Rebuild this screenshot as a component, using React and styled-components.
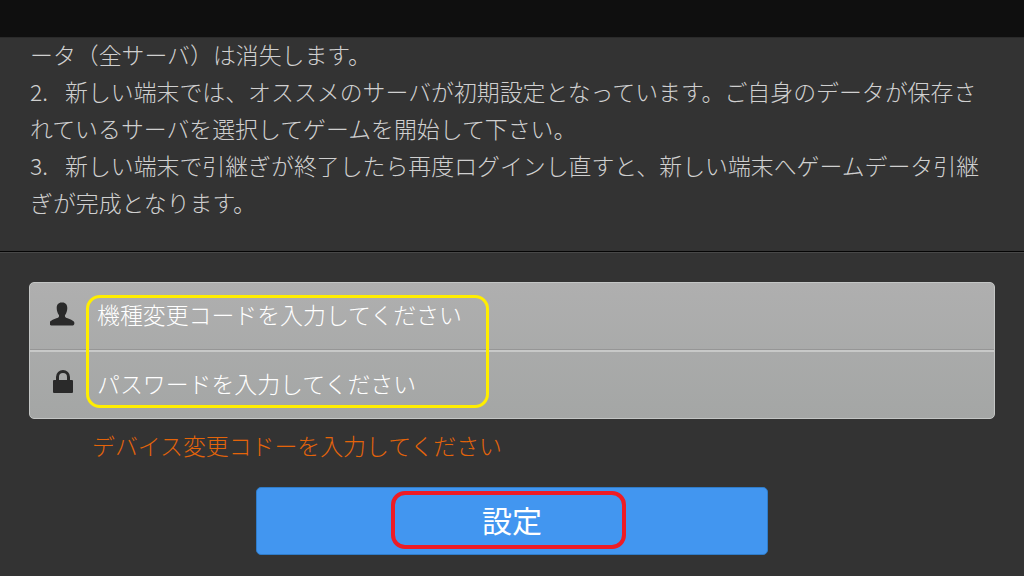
import React from "react";
import styled, { createGlobalStyle } from "styled-components";

const Global = createGlobalStyle`
  html, body { margin: 0; padding: 0; background: #333333; }
  body { font-family: "Noto Sans CJK JP", "Noto Sans", sans-serif; font-weight: 300; }
`;

const Page = styled.div`
  width: 1024px;
  height: 576px;
  overflow: hidden;
  background: #333333;
  display: flex;
  flex-direction: column;
`;

const TopBar = styled.div`
  height: 38px;
  flex: none;
  background: #0f0f0f;
  border-bottom: 1px solid #2a2a2a;
  box-sizing: border-box;
`;

const Notice = styled.div`
  height: 214px;
  flex: none;
  box-sizing: border-box;
  padding: 0 30px;
  border-bottom: 1px solid #050505;
  box-shadow: 0 1px 0 #484848;
  color: #d0d0d0;
  font-size: 22.9px;
`;

const Line = styled.div`
  height: 37px;
  line-height: 33px;
  white-space: nowrap;
`;

const Num = styled.span`
  display: inline-block;
  width: 35px;
`;

const Form = styled.div`
  flex: 1;
  padding: 30px 29px 0;
  display: flex;
  flex-direction: column;
  position: relative;
`;

const Fields = styled.div`
  height: 137px;
  box-sizing: border-box;
  border: 1px solid #c4c6c5;
  border-radius: 5px;
  background: linear-gradient(#afafaf, #a4a6a5);
  display: flex;
  flex-direction: column;
  overflow: hidden;
`;

const Row = styled.div`
  flex: 1;
  box-sizing: border-box;
  padding-bottom: 4px;
  display: flex;
  align-items: center;
  color: #ffffff;
  font-size: 22.9px;
  white-space: nowrap;
  border-top: ${(p) => (p.$divided ? "2px solid #c8c9c8" : "none")};
  box-shadow: ${(p) => (p.$divided ? "0 -1px 0 #969696" : "none")};
`;

const IconBox = styled.div`
  width: 65px;
  margin: 0 2px ${(p) => p.$lift}px 0;
  flex: none;
  display: flex;
  justify-content: center;
  color: #2a2a2a;
`;

const Error = styled.div`
  margin: 10px 0 0 63px;
  height: 37px;
  line-height: 33px;
  color: #e4640a;
  font-size: 22.9px;
  white-space: nowrap;
`;

const Submit = styled.button`
  align-self: center;
  width: 512px;
  height: 68px;
  margin-top: 21px;
  padding: 0 0 5px;
  background: #4296f0;
  border: 1px solid #2f7cc9;
  border-radius: 5px;
  color: #ffffff;
  font-family: inherit;
  font-weight: 400;
  font-size: 30px;
`;

const Highlight = styled.div`
  position: absolute;
  box-sizing: border-box;
  left: ${(p) => p.$x}px;
  top: ${(p) => p.$y}px;
  width: ${(p) => p.$w}px;
  height: ${(p) => p.$h}px;
  border: ${(p) => p.$line}px solid ${(p) => p.$color};
  border-radius: 14px;
`;

const UserIcon = () => (
  <svg width="25" height="24" viewBox="0 0 25 24" fill="currentColor">
    <path d="M12.500 0.500c3 0 4.800 2.300 4.800 5.500 0 2.800-.9 5.200-2 6.700-.6.800-.5 2.200.4 2.700 2.100 1.200 6.800 2.100 8.300 4.400.8 1.300.3 3.700-1.300 3.700H1.300c-1.600 0-2.100-2.400-1.300-3.700 1.500-2.300 6.200-3.200 8.300-4.400.9-.5 1-1.900.4-2.700-1.100-1.500-2-3.900-2-6.700 0-3.200 1.800-5.500 4.800-5.500z" />
  </svg>
);

const LockIcon = () => (
  <svg width="20" height="23" viewBox="0 0 20 23" fill="currentColor">
    <path fillRule="evenodd" d="M1 10H3V7a7 7 0 0 1 14 0v3h2a1 1 0 0 1 1 1v11a1 1 0 0 1-1 1H1a1 1 0 0 1-1-1V11a1 1 0 0 1 1-1zM6 10h8V7a4 4 0 0 0-8 0z" />
  </svg>
);

export default function App() {
  return (
    <Page>
      <Global />
      <TopBar />
      <Notice>
        <Line>ータ（全サーバ）は消失します。</Line>
        <Line><Num>2.</Num>新しい端末では、オススメのサーバが初期設定となっています。ご自身のデータが保存さ</Line>
        <Line>れているサーバを選択してゲームを開始して下さい。</Line>
        <Line><Num>3.</Num>新しい端末で引継ぎが終了したら再度ログインし直すと、新しい端末へゲームデータ引継</Line>
        <Line>ぎが完成となります。</Line>
      </Notice>
      <Form>
        <Fields>
          <Row><IconBox $lift={0}><UserIcon /></IconBox>機種変更コードを入力してください</Row>
          <Row $divided><IconBox $lift={2}><LockIcon /></IconBox>パスワードを入力してください</Row>
        </Fields>
        <Error>デバイス変更コドーを入力してください</Error>
        <Submit>設定</Submit>
        <Highlight $x={86} $y={43} $w={403} $h={113} $line={3} $color="#ffee00" />
        <Highlight $x={391} $y={239} $w={235} $h={58} $line={4} $color="#ee1c25" />
      </Form>
    </Page>
  );
}
